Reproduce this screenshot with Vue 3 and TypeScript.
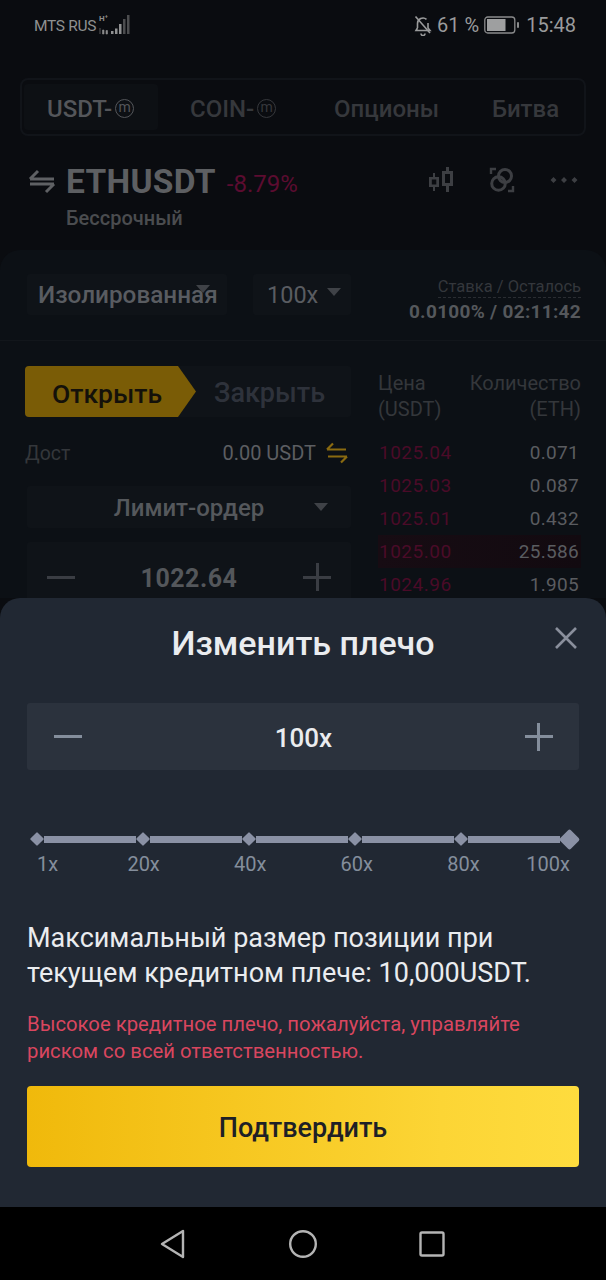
<script setup lang="ts">
const asks: { p: string; q: string; hi?: boolean }[] = [
  { p: '1025.04', q: '0.071' },
  { p: '1025.03', q: '0.087' },
  { p: '1025.01', q: '0.432' },
  { p: '1025.00', q: '25.586', hi: true },
  { p: '1024.96', q: '1.905' },
]
const marks = ['1x', '20x', '40x', '60x', '80x']
const labels = ['1x', '20x', '40x', '60x', '80x', '100x']
</script>

<template>
  <div class="page">
    <div class="back">
      <div class="status">
        <div class="status-left">
          <span class="carrier">MTS RUS</span>
          <svg width="33" height="22" viewBox="0 0 33 22" class="signal">
            <text x="1" y="8" class="hplus">H⁺</text>
            <path d="M2 15v6M4.500 17h1.500v4H4.500zM8 17.500h1.500v3.500H8z" fill="#8a8b8c" stroke="#8a8b8c" stroke-width=".6" />
            <path d="M13 18h2.500v3H13zM17 15.500h2.500V21H17zM21 11h2.500v10H21z" fill="#909192" />
            <path d="M25 6h2.500v15H25zM29 2h2.500v19H29z" fill="#4c4d4f" />
          </svg>
        </div>
        <div class="status-right">
          <svg width="20" height="22" viewBox="0 0 20 22" fill="none" stroke="#9a9b9c" stroke-width="1.600">
            <path d="M4.500 14V9.500a5.500 5.500 0 0 1 9-4.200M15 9v5l2 2.500H3L4.500 14" />
            <path d="M2.500 2.500 17 19" />
            <path d="M8 19.500a2 2 0 0 0 4 0" />
          </svg>
          <span class="pct">61 %</span>
          <svg width="36" height="18" viewBox="0 0 36 18" fill="none">
            <rect x=".8" y="1" width="30" height="16" rx="3" stroke="#8a8b8c" stroke-width="1.300" />
            <rect x="3" y="3" width="18.500" height="12" fill="#9e9fa0" />
            <rect x="33" y="6" width="2" height="6" rx="1" fill="#8a8b8c" />
          </svg>
          <span class="clock">15:48</span>
        </div>
      </div>

      <div class="tabs">
        <div class="tab active">USDT-<span class="m">m</span></div>
        <div class="tab coin">COIN-<span class="m">m</span></div>
        <div class="tab opt">Опционы</div>
        <div class="tab fight">Битва</div>
      </div>

      <div class="symbol">
        <div class="symbol-main">
          <svg class="swap" width="28" height="28" viewBox="0 0 28 28" fill="none" stroke="#5f6164" stroke-width="3">
            <path d="M2 12h24M2 12l8-8" />
            <path d="M26 17H2M26 17l-8 8" />
          </svg>
          <span class="name">ETHUSDT</span>
          <span class="change">-8.79%</span>
          <div class="symbol-icons">
            <svg width="26" height="26" viewBox="0 0 26 26" fill="#3d3f43">
              <path d="M5 6h2v4h4v10H7v4H5v-4H1V10h4zM3.800 12.500v5h4.500v-5z" fill-rule="evenodd" />
              <path d="M18 0h3v4h4v15h-4v6h-3v-6h-4V4h4zM17 7v9h5V7z" fill-rule="evenodd" />
            </svg>
            <svg width="26" height="26" viewBox="0 0 26 26" fill="none" stroke="#3d3f43" stroke-width="3">
              <circle cx="9.500" cy="16.500" r="6.800" />
              <circle cx="16" cy="9" r="6.500" />
              <path d="M2 7V2h5M24 19v5h-5" stroke-width="2.400" />
            </svg>
            <svg width="28" height="6" viewBox="0 0 28 6" fill="#3d3f43" class="dots">
              <path d="M3.500 0 6.500 3 3.500 6 .5 3zM14 0l3 3-3 3-3-3zM24.500 0l3 3-3 3-3-3z" />
            </svg>
          </div>
        </div>
        <div class="perp">Бессрочный</div>
      </div>

      <div class="panel">
        <div class="margin-row">
          <div class="select iso">
            <span>Изолированная</span>
            <i class="tri iso-tri"></i>
          </div>
          <div class="select lev">
            <span>100x</span>
            <i class="tri"></i>
          </div>
          <div class="funding">
            <div class="funding-label">Ставка / Осталось</div>
            <div class="funding-value">0.0100% / 02:11:42</div>
          </div>
        </div>

        <div class="trade">
          <div class="form">
            <div class="switch">
              <div class="open">Открыть</div>
              <div class="close">Закрыть</div>
            </div>
            <div class="avail">
              <span class="avail-label">Дост</span>
              <span class="avail-val">0.00 USDT</span>
              <svg width="22" height="22" viewBox="0 0 22 22" fill="none" stroke="#8a6a10" stroke-width="2.200">
                <path d="M1 7.500h19M1 7.500l6-6" />
                <path d="M21 14.500H2M21 14.500l-6 6" />
              </svg>
            </div>
            <div class="order-type">
              <span>Лимит-ордер</span>
              <i class="tri"></i>
            </div>
            <div class="stepper">
              <i class="minus"></i>
              <span>1022.64</span>
              <i class="plus"></i>
            </div>
          </div>

          <div class="book">
            <div class="book-head">
              <span>Цена<br />(USDT)</span>
              <span class="qty-h">Количество<br />(ETH)</span>
            </div>
            <div v-for="a in asks" :key="a.p" class="ask" :class="{ hi: a.hi }">
              <span class="ask-p">{{ a.p }}</span>
              <span class="ask-q">{{ a.q }}</span>
            </div>
          </div>
        </div>
      </div>
    </div>

    <div class="sheet">
      <div class="sheet-head">
        <h2>Изменить плечо</h2>
        <svg class="x" width="24" height="24" viewBox="0 0 24 24" fill="none" stroke="#8a8f9c" stroke-width="2.600">
          <path d="M2 2l20 20M22 2 2 22" />
        </svg>
      </div>

      <div class="lev-input">
        <i class="minus light"></i>
        <span>100x</span>
        <i class="plus light"></i>
      </div>

      <div class="slider">
        <template v-for="m in marks" :key="m">
          <i class="dia"></i>
          <i class="seg"></i>
        </template>
        <i class="dia big"></i>
      </div>
      <div class="slider-labels">
        <span v-for="l in labels" :key="l">{{ l }}</span>
      </div>

      <p class="info">Максимальный размер позиции при текущем кредитном плече: 10,000USDT.</p>
      <p class="warn">Высокое кредитное плечо, пожалуйста, управляйте риском со всей ответственностью.</p>
      <div class="confirm">Подтвердить</div>
    </div>

    <div class="nav">
      <svg width="28" height="30" viewBox="0 0 28 30" fill="none" stroke="#b4b4b4" stroke-width="2.400" stroke-linejoin="round">
        <path d="M24 2v26L3 15z" />
      </svg>
      <svg width="30" height="30" viewBox="0 0 30 30" fill="none" stroke="#b4b4b4" stroke-width="2.400">
        <circle cx="15" cy="15" r="12.800" />
      </svg>
      <svg width="26" height="26" viewBox="0 0 26 26" fill="none" stroke="#b4b4b4" stroke-width="2.400">
        <rect x="1.500" y="1.500" width="23" height="23" rx="1.500" />
      </svg>
    </div>
  </div>
</template>

<style scoped>
* { box-sizing: border-box; }
i { display: block; font-style: normal; }
p, h2 { margin: 0; }
.page {
  width: 606px;
  height: 1280px;
  display: flex;
  flex-direction: column;
  overflow: hidden;
  background: #0a0c10;
  font-family: Roboto, "Noto Sans", sans-serif;
  color: #8a8b8d;
}
.back { height: 598px; flex: none; overflow: hidden; }

.status {
  height: 50px;
  padding: 0 30px 0 34px;
  display: flex;
  justify-content: space-between;
  align-items: center;
}
.status-left { display: flex; align-items: center; gap: 2px; margin-top: 1px; }
.carrier { font-size: 15.500px; color: #8f9091; letter-spacing: -0.300px; }
.signal { margin-top: -3px; }
.hplus { font-size: 8px; font-weight: 700; fill: #8a8b8c; }
.status-right { display: flex; align-items: center; color: #9a9b9c; }
.pct { font-size: 20px; margin-left: 4px; margin-right: 5px; }
.clock { font-size: 20px; margin-left: 6px; }

.tabs {
  margin: 28px 20px 0;
  height: 58px;
  border: 2px solid #111419;
  border-radius: 8px;
  padding: 4px 2px;
  display: flex;
  align-items: stretch;
  font-size: 24px;
  font-weight: 500;
  color: #36383c;
}
.tab { display: flex; align-items: center; white-space: nowrap; padding-top: 3px; }
.tab.active { width: 134px; padding-left: 23px; background: #0d1014; border-radius: 4px; color: #54565a; }
.coin { margin-left: 32px; width: 144px; }
.opt { width: 158px; }
.m {
  width: 19px;
  height: 19px;
  margin-left: 3px;
  margin-top: -1px;
  border: 1px solid currentColor;
  border-radius: 50%;
  font-size: 14px;
  font-weight: 400;
  display: inline-flex;
  align-items: center;
  justify-content: center;
  line-height: 1;
  padding-bottom: 2px;
}

.symbol { margin-top: 23px; padding: 0 28px 0 28px; }
.symbol-main { display: flex; align-items: center; height: 44px; }
.swap { margin-right: 10px; }
.name { font-size: 33.500px; font-weight: 700; color: #5d5f62; letter-spacing: 0.300px; margin-top: 1px; }
.change { font-size: 24px; color: #5c0c30; margin-left: 11px; margin-top: 6px; }
.symbol-icons { margin-left: auto; display: flex; align-items: center; gap: 35px; margin-top: -2px; }
.perp { margin-left: 38px; font-size: 20px; font-weight: 500; color: #4a4c4f; line-height: 22px; margin-top: 4px; }

.panel {
  margin-top: 21px;
  height: 400px;
  background: #0c1015;
  border-radius: 20px 20px 0 0;
}
.margin-row {
  height: 91px;
  padding: 24px 25px 0 27px;
  display: flex;
  align-items: flex-start;
  border-bottom: 1px solid #12161b;
}
.select {
  height: 41px;
  background: #0f1318;
  border-radius: 3px;
  display: flex;
  align-items: center;
  font-size: 23.500px;
  color: #595c61;
  position: relative;
}
.iso { width: 200px; padding-left: 11px; font-weight: 500; white-space: nowrap; font-size: 24.300px; }
.iso-tri { position: absolute; left: 169px; top: 17px; }
.lev { width: 98px; margin-left: 26px; padding-left: 14px; gap: 9px; }
.tri {
  width: 0;
  height: 0;
  border-left: 7px solid transparent;
  border-right: 7px solid transparent;
  border-top: 8px solid #3f4247;
  margin-top: -6px;
}
.funding { margin-left: auto; text-align: right; margin-top: 3px; }
.funding-label {
  display: inline-block;
  font-size: 16.500px;
  line-height: 20px;
  color: #34373c;
  border-bottom: 1px dashed #2a2d32;
}
.funding-value { font-size: 19px; font-weight: 700; color: #55585c; margin-top: 2px; letter-spacing: 0.300px; }

.trade { display: flex; padding: 25px 25px 0 25px; }
.form { width: 326px; flex: none; }
.switch { display: flex; height: 51px; background: #0f1318; border-radius: 3px; }
.open {
  width: 171px;
  background: #7a5c06;
  clip-path: polygon(0 0, 153px 0, 100% 50%, 153px 100%, 0 100%);
  border-radius: 4px;
  display: flex;
  align-items: center;
  padding: 3px 0 0 27px;
  font-size: 26.500px;
  font-weight: 500;
  color: #14110a;
}
.close {
  flex: 1;
  display: flex;
  align-items: center;
  padding: 3px 0 0 18px;
  font-size: 27px;
  font-weight: 500;
  color: #2e323b;
}
.avail { display: flex; align-items: center; height: 24px; margin-top: 24px; }
.avail-label { font-size: 19.500px; color: #34373b; }
.avail-val { margin-left: auto; margin-right: 10px; font-size: 20px; color: #5c5e62; }
.avail svg { margin-right: 3px; }
.order-type {
  margin: 21px 0 0 2px;
  height: 42px;
  background: #0f1318;
  border-radius: 3px;
  display: flex;
  align-items: center;
  justify-content: center;
  position: relative;
  font-size: 24px;
  font-weight: 500;
  color: #55585c;
  padding-top: 2px;
}
.order-type .tri { position: absolute; right: 23px; top: 17px; margin: 0; }
.stepper {
  margin: 14px 0 0 2px;
  height: 70px;
  background: #0f1318;
  border-radius: 3px;
  display: flex;
  align-items: center;
  justify-content: space-between;
  padding: 0 20px;
  font-size: 25px;
  font-weight: 700;
  color: #54575b;
  letter-spacing: 0.500px;
}
.stepper span { margin-top: 3px; }
.minus { width: 28px; height: 3px; background: #3a3d43; }
.plus { width: 28px; height: 28px; position: relative; }
.plus::before, .plus::after { content: ""; position: absolute; background: #3a3d43; }
.plus::before { left: 0; right: 0; top: 12.500px; height: 3px; }
.plus::after { top: 0; bottom: 0; left: 12.500px; width: 3px; }

.book { flex: 1; margin-left: 27px; min-width: 0; }
.book-head {
  display: flex;
  justify-content: space-between;
  font-size: 20px;
  line-height: 26px;
  color: #34373b;
  padding-top: 4px;
  margin-bottom: 14px;
}
.qty-h { text-align: right; }
.ask {
  display: flex;
  justify-content: space-between;
  height: 33px;
  align-items: center;
  padding-right: 2px;
  font-size: 19px;
}
.ask.hi { background: linear-gradient(90deg, #170c13, #120a10); }
.ask-p { color: #4a0b28; letter-spacing: 0.500px; margin-left: 1px; }
.ask-q { color: #5a5c60; letter-spacing: 0.300px; }

.sheet {
  height: 609px;
  flex: none;
  background: #212833;
  border-radius: 20px 20px 0 0;
  padding: 0 27px;
}
.sheet-head { height: 105px; position: relative; display: flex; justify-content: center; padding-top: 23px; }
h2 { font-size: 34px; font-weight: 500; color: #eaecef; line-height: 44px; }
.x { position: absolute; right: 1px; top: 28px; }
.lev-input {
  height: 67px;
  background: #2b323d;
  border-radius: 3px;
  display: flex;
  align-items: center;
  justify-content: space-between;
  padding: 0 26px 0 27px;
  font-size: 26px;
  font-weight: 500;
  color: #eaecef;
}
.lev-input span { padding-top: 3px; }
.light { background: #848e9c; }
.plus.light { background: none; }
.plus.light::before, .plus.light::after { background: #848e9c; }
.slider {
  margin: 57px 0 0 5px;
  display: flex;
  align-items: center;
  height: 24px;
  padding-right: 2px;
}
.dia { width: 10px; height: 10px; background: #8a91a5; transform: rotate(45deg); flex: none; border-radius: 1px; }
.dia.big { width: 15px; height: 15px; border-radius: 2px; }
.seg { flex: 1; height: 7px; background: #8a91a5; margin: 0 2px; }
.slider-labels {
  display: flex;
  justify-content: space-between;
  padding: 0 9px 0 10px;
  font-size: 20px;
  color: #848e9c;
  margin-top: 1px;
  line-height: 24px;
}
.slider-labels span { width: 0; display: flex; justify-content: center; white-space: nowrap; }
.slider-labels span:first-child { justify-content: flex-start; }
.slider-labels span:last-child { justify-content: flex-end; }
.info {
  margin-top: 45px;
  font-size: 27px;
  line-height: 35px;
  color: #eaecef;
}
.warn {
  margin-top: 20px;
  font-size: 20.300px;
  line-height: 27px;
  color: #d9465f;
}
.confirm {
  margin-top: 21px;
  height: 81px;
  border-radius: 4px;
  background: linear-gradient(90deg, #f0b90b, #fcd535 75%, #fedc3e);
  display: flex;
  align-items: center;
  justify-content: center;
  padding-top: 3px;
  font-size: 27px;
  font-weight: 500;
  color: #1e2026;
}
.nav {
  height: 73px;
  flex: none;
  background: #000;
  display: flex;
  align-items: center;
  padding-left: 159px;
  gap: 101px;
}
</style>
